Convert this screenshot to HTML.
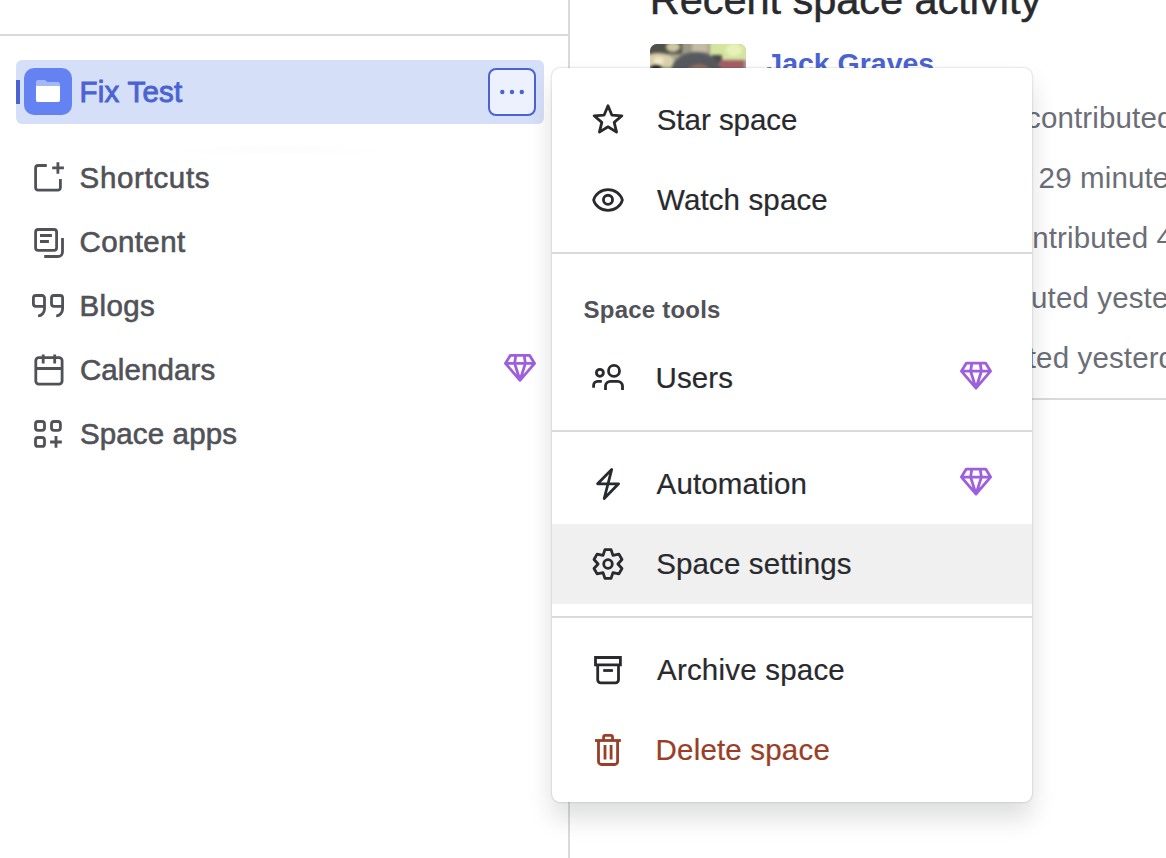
<!DOCTYPE html>
<html><head><meta charset="utf-8">
<style>
html,body{margin:0;padding:0;width:1166px;height:858px;overflow:hidden;background:#fff;font-family:"Liberation Sans",sans-serif;}
body{position:relative;}
.a{position:absolute;}
.t{position:absolute;white-space:nowrap;line-height:1;}
svg.o{position:absolute;left:0;top:0;}
</style></head><body>
<div class="a" style="left:0;top:34px;width:569px;height:2px;background:#DADADA"></div>
<div class="a" style="left:568px;top:0;width:2px;height:858px;background:#DADADA"></div>
<div class="t" style="left:649.7px;top:-21.1px;font-size:41.5px;font-weight:400;letter-spacing:-0.03px;color:#292A2E;-webkit-text-stroke:0.5px #292A2E">Recent space activity</div>
<div class="a" style="left:650px;top:44px;width:96px;height:96px;border-radius:7px;overflow:hidden;background:#a9a48e">
  <div class="a" style="left:-4px;top:-4px;width:104px;height:104px;filter:blur(1.6px)">
    <div class="a" style="left:0;top:0;width:36px;height:14px;background:#4f5049"></div>
    <div class="a" style="left:20px;top:2px;width:14px;height:10px;border-radius:50%;background:#cfc5a0"></div>
    <div class="a" style="left:36px;top:0;width:30px;height:16px;background:#9d9886"></div>
    <div class="a" style="left:46px;top:2px;width:16px;height:10px;background:#c3bba3"></div>
    <div class="a" style="left:64px;top:0;width:40px;height:20px;background:#d4e4a0"></div>
    <div class="a" style="left:80px;top:4px;width:16px;height:12px;border-radius:50%;background:#e8f2b8"></div>
    <div class="a" style="left:0;top:13px;width:28px;height:14px;border-radius:40% 60% 0 0;background:#d9cfaa"></div>
    <div class="a" style="left:8px;top:17px;width:10px;height:8px;border-radius:50%;background:#f0e8cc"></div>
    <div class="a" style="left:4px;top:25px;width:12px;height:6px;border-radius:50%;background:#1e1e1c"></div>
    <div class="a" style="left:66px;top:15px;width:10px;height:8px;background:#4a4a48"></div>
    <div class="a" style="left:74px;top:20px;width:24px;height:14px;background:#a25e66"></div>
    <div class="a" style="left:25px;top:12px;width:50px;height:40px;border-radius:50% 50% 20% 20%;background:#56595e"></div>
    <div class="a" style="left:40px;top:24px;width:26px;height:20px;border-radius:50%;background:#8b6e5e"></div>
  </div>
</div>
<div class="t" style="left:766.3px;top:48.6px;font-size:28.5px;font-weight:700;letter-spacing:-0.01px;color:#4A63D0">Jack Graves</div>
<div class="t" style="left:1026.1px;top:103.2px;font-size:29.5px;font-weight:400;letter-spacing:0.13px;color:#6B6E76">contributed</div>
<div class="t" style="left:1038.6px;top:162.7px;font-size:29.5px;font-weight:400;letter-spacing:0.13px;color:#6B6E76">29 minutes ago</div>
<div class="t" style="left:1000.8px;top:223px;font-size:29.5px;font-weight:400;letter-spacing:0.13px;color:#6B6E76">contributed 4</div>
<div class="t" style="left:941.6px;top:282.8px;font-size:29.5px;font-weight:400;letter-spacing:0.13px;color:#6B6E76">contributed yesterday</div>
<div class="t" style="left:921.8px;top:342.6px;font-size:29.5px;font-weight:400;letter-spacing:0.13px;color:#6B6E76">contributed yesterday</div>
<div class="a" style="left:1032px;top:398px;width:134px;height:2px;background:#DADADA"></div>
<div class="a" style="left:160px;top:143px;width:240px;height:14px;border-radius:50%;background:radial-gradient(ellipse at center,rgba(0,0,0,.012),rgba(0,0,0,0) 70%)"></div>
<div class="a" style="left:16px;top:60px;width:528px;height:64px;border-radius:6px;background:#D6DFF8"></div>
<div class="a" style="left:16px;top:80px;width:4px;height:24px;background:#4A63D0"></div>
<div class="a" style="left:24px;top:67.5px;width:48px;height:47.5px;border-radius:10px;background:#6582F3"></div>
<div class="t" style="left:79.4px;top:76.5px;font-size:29.5px;font-weight:400;letter-spacing:0.257px;color:#4A63D0;-webkit-text-stroke:0.9px #4A63D0">Fix Test</div>
<div class="a" style="left:488px;top:68px;width:44px;height:44px;border:2px solid #4A63D0;border-radius:8px;background:#EDF1FD"></div>
<div class="t" style="left:79.6px;top:162.9px;font-size:29.5px;font-weight:400;letter-spacing:0.663px;color:#505258;-webkit-text-stroke:0.6px #505258">Shortcuts</div>
<div class="t" style="left:79.6px;top:226.9px;font-size:29.5px;font-weight:400;letter-spacing:0.367px;color:#505258;-webkit-text-stroke:0.6px #505258">Content</div>
<div class="t" style="left:79.5px;top:290.6px;font-size:29.5px;font-weight:400;letter-spacing:0.375px;color:#505258;-webkit-text-stroke:0.6px #505258">Blogs</div>
<div class="t" style="left:79.9px;top:354.8px;font-size:29.5px;font-weight:400;letter-spacing:0.113px;color:#505258;-webkit-text-stroke:0.6px #505258">Calendars</div>
<div class="t" style="left:79.9px;top:418.8px;font-size:29.5px;font-weight:400;letter-spacing:0.144px;color:#505258;-webkit-text-stroke:0.6px #505258">Space apps</div>
<svg class="o" width="1166" height="858" viewBox="0 0 1166 858" fill="none">
<g fill="#4A63D0"><circle cx="502.3" cy="92" r="2.2"/><circle cx="512" cy="92" r="2.2"/><circle cx="521.8" cy="92" r="2.2"/></g>
<path d="M36,82 a2,2 0 0 1 2,-2 h7 l2.2,2 h10.7 a2,2 0 0 1 2,2 v16 a2,2 0 0 1 -2,2 h-20 a2,2 0 0 1 -2,-2z" fill="#A4B7F8"/>
<path d="M36,86 h24 v14 a2,2 0 0 1 -2,2 h-20 a2,2 0 0 1 -2,-2z" fill="#fff"/>
<g stroke="#505258" stroke-width="2.8" fill="none">
<path d="M46.8,165.5 H38.1 a2.5,2.5 0 0 0 -2.5,2.5 V187.7 a2.5,2.5 0 0 0 2.5,2.5 H57.9 a2.5,2.5 0 0 0 2.5,-2.5 V179"/>
<path d="M52.2,167.8 H63.9 M57.9,162.2 V173.7"/>
<rect x="35.6" y="229.5" width="21" height="20.9" rx="2.6"/>
<path d="M40,235.5 H51.9 M40,241.5 H48.9"/>
<path d="M62.5,238.1 V252 a4.5,4.5 0 0 1 -4.5,4.5 H44.2"/>
<path d="M44.5,306.3 H35.9 a2.5,2.5 0 0 1 -2.5,-2.5 V298 a2.5,2.5 0 0 1 2.5,-2.5 H42 a2.5,2.5 0 0 1 2.5,2.5 V308.8 a6.4,7 0 0 1 -6.4,7"/>
<path d="M62.6,306.3 H54 a2.5,2.5 0 0 1 -2.5,-2.5 V298 a2.5,2.5 0 0 1 2.5,-2.5 H60.1 a2.5,2.5 0 0 1 2.5,2.5 V308.8 a6.4,7 0 0 1 -6.4,7"/>
<rect x="35.8" y="357.6" width="26.3" height="26.5" rx="3"/>
<path d="M35.8,368.5 H62.1 M43.2,354.4 V363.4 M54.7,354.4 V363.4"/>
<rect x="35.5" y="421.5" width="9" height="8.8" rx="2.5"/>
<rect x="51.5" y="421.5" width="8.9" height="8.8" rx="2.5"/>
<rect x="35.5" y="437.5" width="9" height="8.9" rx="2.5"/>
<path d="M50.1,442 H61.8 M56,436.1 V447.8"/>
</g>
<path d="M510.3,355.4 H529.7 L534.6,363.4 L520,380.3 L505.4,363.4 Z M505.4,363.4 H534.6 M515.8,355.4 L514.6,363.4 L520,380.3 L525.4,363.4 L524.2,355.4" fill="none" stroke="#9D5FDC" stroke-width="2.8" stroke-linejoin="round"/>
</svg>
<div class="a" style="left:552px;top:68px;width:480px;height:734px;border-radius:8px;background:#fff;box-shadow:0 0 2px rgba(30,31,33,.31),0 16px 24px rgba(30,31,33,.15)"></div>
<div class="a" style="left:552px;top:252px;width:480px;height:2px;background:#DADADA"></div>
<div class="a" style="left:552px;top:430px;width:480px;height:2px;background:#DADADA"></div>
<div class="a" style="left:552px;top:524px;width:480px;height:80px;background:#F0F0F0"></div>
<div class="a" style="left:552px;top:616px;width:480px;height:2px;background:#DADADA"></div>
<div class="t" style="left:656.7px;top:105.1px;font-size:29.5px;font-weight:400;letter-spacing:-0.022px;color:#292A2E;-webkit-text-stroke:0.2px #292A2E">Star space</div>
<div class="t" style="left:657.0px;top:185.0px;font-size:29.5px;font-weight:400;letter-spacing:0.13px;color:#292A2E;-webkit-text-stroke:0.2px #292A2E">Watch space</div>
<div class="t" style="left:583.6px;top:297.7px;font-size:24px;font-weight:700;letter-spacing:0.21px;color:#505258">Space tools</div>
<div class="t" style="left:655.5px;top:363.0px;font-size:29.5px;font-weight:400;letter-spacing:0.125px;color:#292A2E;-webkit-text-stroke:0.2px #292A2E">Users</div>
<div class="t" style="left:656.6px;top:469.3px;font-size:29.5px;font-weight:400;letter-spacing:0.122px;color:#292A2E;-webkit-text-stroke:0.2px #292A2E">Automation</div>
<div class="t" style="left:656.2px;top:549.2px;font-size:29.5px;font-weight:400;letter-spacing:0.138px;color:#292A2E;-webkit-text-stroke:0.2px #292A2E">Space settings</div>
<div class="t" style="left:657.0px;top:655.0px;font-size:29.5px;font-weight:400;letter-spacing:0.208px;color:#292A2E;-webkit-text-stroke:0.2px #292A2E">Archive space</div>
<div class="t" style="left:655.6px;top:734.7px;font-size:29.5px;font-weight:400;letter-spacing:0.182px;color:#9A3E27;-webkit-text-stroke:0.2px #9A3E27">Delete space</div>
<svg class="o" width="1166" height="858" viewBox="0 0 1166 858" fill="none">
<g stroke="#292A2E" stroke-width="2.8" fill="none" stroke-linejoin="round">
<path d="M608.00,105.70 L611.82,115.04 L621.89,115.79 L614.18,122.31 L616.58,132.11 L608.00,126.80 L599.42,132.11 L601.82,122.31 L594.11,115.79 L604.18,115.04Z"/>
<path d="M593.6,200 C595.2,194 601,189.6 608,189.6 C615,189.6 620.8,194 622.4,200 C620.8,206 615,210.4 608,210.4 C601,210.4 595.2,206 593.6,200Z"/>
<circle cx="608" cy="199.8" r="4.55"/>
<circle cx="614" cy="370.9" r="5.5"/>
<circle cx="599.9" cy="372.8" r="3.5"/>
<path d="M605.5,389.9 V386.3 a5,5 0 0 1 5,-5 H617.5 a5,5 0 0 1 5,5 V389.9" stroke-linejoin="miter"/>
<path d="M593.6,387.8 V385.3 a4,4 0 0 1 4,-4 H601.8" stroke-linejoin="miter"/>
<path d="M611.7,469.5 L597.6,483.8 L618.6,483.8 L604.2,498.5 Z"/>
<path d="M604.94,549.62 L611.06,549.62 L612.95,555.43 L618.92,554.16 L621.98,559.46 L617.90,564.00 L621.98,568.54 L618.92,573.84 L612.95,572.57 L611.06,578.38 L604.94,578.38 L603.05,572.57 L597.08,573.84 L594.02,568.54 L598.10,564.00 L594.02,559.46 L597.08,554.16 L603.05,555.43Z"/>
<circle cx="608" cy="564" r="4.3"/>
<path d="M595.5,657.5 H620.4 V664.8 H595.5 Z" stroke-linejoin="miter"/>
<path d="M597.7,664.8 V679.8 a3,3 0 0 0 3,3 H615.5 a3,3 0 0 0 3,-3 V664.8" stroke-linejoin="miter"/>
<path d="M603.2,670.5 H612.9"/>
</g>
<g stroke="#9A3E27" stroke-width="2.8" fill="none">
<path d="M595,740.5 H620.9"/>
<path d="M603.6,740.5 V737 a1.6,1.6 0 0 1 1.6,-1.6 H610.9 a1.6,1.6 0 0 1 1.6,1.6 V740.5"/>
<path d="M598.5,740.5 V761.5 a3,3 0 0 0 3,3 H614.6 a3,3 0 0 0 3,-3 V740.5"/>
<path d="M605,744.9 V759.6 M611.1,744.9 V759.6"/>
</g>
<path d="M966.3,363.2 H985.7 L990.6,371.2 L976,388.1 L961.4,371.2 Z M961.4,371.2 H990.6 M971.8,363.2 L970.6,371.2 L976,388.1 L981.4,371.2 L980.2,363.2" fill="none" stroke="#9D5FDC" stroke-width="2.8" stroke-linejoin="round"/>
<path d="M966.3,469.09999999999997 H985.7 L990.6,477.09999999999997 L976,494.0 L961.4,477.09999999999997 Z M961.4,477.09999999999997 H990.6 M971.8,469.09999999999997 L970.6,477.09999999999997 L976,494.0 L981.4,477.09999999999997 L980.2,469.09999999999997" fill="none" stroke="#9D5FDC" stroke-width="2.8" stroke-linejoin="round"/>
</svg>
</body></html>
